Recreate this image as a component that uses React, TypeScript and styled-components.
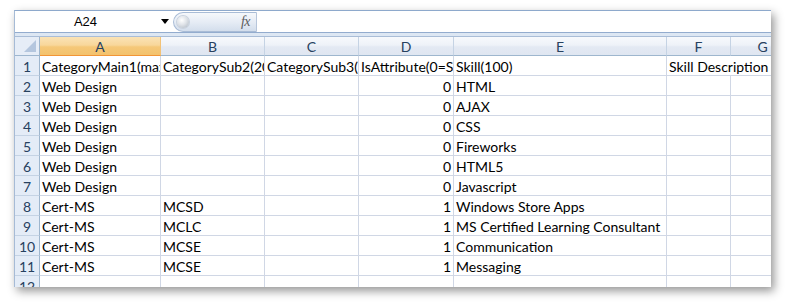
import React from "react";
import styled, { createGlobalStyle, css } from "styled-components";

const Global = createGlobalStyle`
  html, body { margin: 0; padding: 0; background: #ffffff; }
  body { font-family: "Lato", "Open Sans", sans-serif; }
`;

const Page = styled.div`
  padding: 10px 0 0 14px;
  width: 785px;
  height: 305px;
  box-sizing: border-box;
`;

const Window = styled.div`
  width: 757px;
  height: 277px;
  overflow: hidden;
  box-sizing: border-box;
  border-top: 1px solid #8ea9cc;
  border-left: 1px solid #a6bbd6;
  background: #ffffff;
  box-shadow: 3px 4px 9px rgba(0, 0, 0, 0.42);
  display: flex;
  flex-direction: column;
`;

const FormulaBar = styled.div`
  display: flex;
  align-items: stretch;
  height: 21px;
  flex: none;
  background: #ffffff;
  border-bottom: 1px solid #93acce;
`;

const NameBox = styled.div`
  width: 141px;
  display: flex;
  align-items: center;
  justify-content: center;
  font-family: "Liberation Sans", Arial, sans-serif;
  font-size: 13px;
  color: #000;
`;

const DropButton = styled.div`
  width: 17px;
  display: flex;
  align-items: center;
  justify-content: center;
`;

const Pill = styled.div`
  width: 84px;
  margin-top: 1px;
  box-sizing: border-box;
  border: 1px solid #a9bcd6;
  border-right: 1px solid #b7c6db;
  border-radius: 11px 0 0 11px;
  background: linear-gradient(to bottom, #f6f8fb 0%, #e6ecf5 50%, #d3deec 100%);
  display: flex;
  align-items: center;
  justify-content: space-between;
  padding: 0 6px 0 3px;
`;

const Orb = styled.div`
  width: 12px;
  height: 12px;
  border-radius: 50%;
  background: radial-gradient(circle at 40% 35%, #ffffff 0%, #dfe3e8 45%, #a9b2be 100%);
  box-shadow: 0 0 0 1px #c9d2de;
`;

const Fx = styled.span`
  font-family: "Liberation Serif", "Times New Roman", serif;
  font-style: italic;
  font-size: 14px;
  color: #5c5c5c;
  letter-spacing: -0.5px;
`;

const FormulaInput = styled.div`
  flex: 1;
  background: #ffffff;
`;

const Band = styled.div`
  height: 3px;
  flex: none;
  background: #dde7f3;
  border-bottom: 1px solid #a9bdd7;
`;

const Grid = styled.div`
  display: grid;
  grid-template-columns: 25px 121px 104px 94px 95px 213px 64px 64px;
  grid-auto-rows: 20px;
  grid-template-rows: 19px;
  width: max-content;
`;

const headerBase = css`
  box-sizing: border-box;
  display: flex;
  align-items: center;
  justify-content: center;
  font-family: "Lato", "Open Sans", sans-serif;
  font-size: 14px;
  color: #27415f;
`;

const Corner = styled.div`
  ${headerBase};
  justify-content: flex-end;
  align-items: flex-end;
  padding: 0 3px 3px 0;
  background: #e6edf7;
  border-right: 1px solid #9eb6ce;
  border-bottom: 1px solid #9eb6ce;
`;

const ColHead = styled.div<{ $active?: boolean }>`
  ${headerBase};
  border-right: 1px solid ${(p) => (p.$active ? "#f2c277" : "#c5d3e4")};
  border-bottom: 1px solid ${(p) => (p.$active ? "#f29536" : "#9eb6ce")};
  background: ${(p) =>
    p.$active
      ? "linear-gradient(to bottom, #fae3b6 0%, #f8d79b 45%, #f5c879 55%, #f3c26d 100%)"
      : "linear-gradient(to bottom, #f7f9fc 0%, #eef2f8 45%, #e3e9f3 55%, #dfe6f1 100%)"};
`;

const RowHead = styled.div`
  ${headerBase};
  background: #e4ecf7;
  border-right: 1px solid #9eb6ce;
  border-bottom: 1px solid #c5d3e4;
  align-items: flex-start;
  padding-top: 2px;
`;

const Cell = styled.div<{ $num?: boolean; $span?: number }>`
  box-sizing: border-box;
  border-right: 1px solid #d0d7e5;
  border-bottom: 1px solid #d0d7e5;
  font-family: "Lato", "Open Sans", sans-serif;
  font-size: 14px;
  line-height: 21px;
  color: #000;
  white-space: nowrap;
  overflow: hidden;
  padding: 0 2px 0 2px;
  text-align: ${(p) => (p.$num ? "right" : "left")};
  grid-column: ${(p) => (p.$span ? `span ${p.$span}` : "auto")};
`;

const columns = ["A", "B", "C", "D", "E", "F", "G"];

type Row = string[];
const rows: Row[] = [
  ["CategoryMain1(max50)", "CategorySub2(200)", "CategorySub3(200)", "IsAttribute(0=Skill,1=Cert)", "Skill(100)", "Skill Description"],
  ["Web Design", "", "", "0", "HTML", "", ""],
  ["Web Design", "", "", "0", "AJAX", "", ""],
  ["Web Design", "", "", "0", "CSS", "", ""],
  ["Web Design", "", "", "0", "Fireworks", "", ""],
  ["Web Design", "", "", "0", "HTML5", "", ""],
  ["Web Design", "", "", "0", "Javascript", "", ""],
  ["Cert-MS", "MCSD", "", "1", "Windows Store Apps", "", ""],
  ["Cert-MS", "MCLC", "", "1", "MS Certified Learning Consultant", "", ""],
  ["Cert-MS", "MCSE", "", "1", "Communication", "", ""],
  ["Cert-MS", "MCSE", "", "1", "Messaging", "", ""],
  ["", "", "", "", "", "", ""],
];

export default function App() {
  return (
    <>
      <Global />
      <Page>
        <Window>
          <FormulaBar>
            <NameBox>A24</NameBox>
            <DropButton>
              <svg width="8" height="5" viewBox="0 0 8 5">
                <path d="M0 0 H8 L4 5 Z" fill="#000" />
              </svg>
            </DropButton>
            <Pill>
              <Orb />
              <Fx>fx</Fx>
            </Pill>
            <FormulaInput />
          </FormulaBar>
          <Band />
          <Grid>
            <Corner>
              <svg width="12" height="12" viewBox="0 0 12 12">
                <path d="M12 0 V12 H0 Z" fill="#b4c6de" />
              </svg>
            </Corner>
            {columns.map((c) => (
              <ColHead key={c} $active={c === "A"}>
                {c}
              </ColHead>
            ))}
            {rows.map((r, i) => (
              <React.Fragment key={i}>
                <RowHead>{i + 1}</RowHead>
                {i === 0 ? (
                  <>
                    {r.slice(0, 5).map((v, j) => (
                      <Cell key={j}>{v}</Cell>
                    ))}
                    <Cell $span={2}>{r[5]}</Cell>
                  </>
                ) : (
                  r.map((v, j) => (
                    <Cell key={j} $num={j === 3}>
                      {v}
                    </Cell>
                  ))
                )}
              </React.Fragment>
            ))}
          </Grid>
        </Window>
      </Page>
    </>
  );
}
